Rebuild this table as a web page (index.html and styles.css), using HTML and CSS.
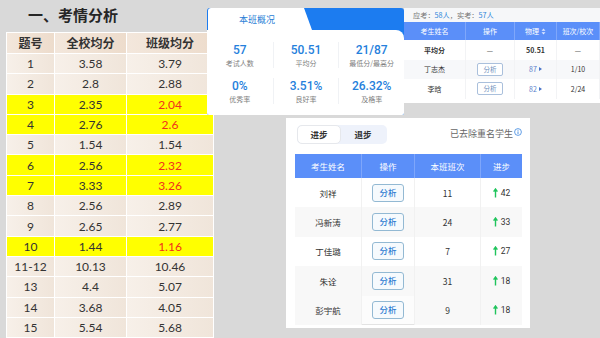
FILE: index.html
```html
<!DOCTYPE html>
<html lang="zh">
<head>
<meta charset="utf-8">
<link rel="stylesheet" href="styles.css">
</head>
<body>
<div class="slide">
  <section class="left">
    <h1 class="title">一、考情分析</h1>
    <table class="qtable">
      <thead>
        <tr><th>题号</th><th>全校均分</th><th>班级均分</th></tr>
      </thead>
      <tbody>
        <tr><td>1</td><td>3.58</td><td>3.79</td></tr>
        <tr><td>2</td><td>2.8</td><td>2.88</td></tr>
        <tr class="hl"><td>3</td><td>2.35</td><td class="red">2.04</td></tr>
        <tr class="hl"><td>4</td><td>2.76</td><td class="red">2.6</td></tr>
        <tr><td>5</td><td>1.54</td><td>1.54</td></tr>
        <tr class="hl"><td>6</td><td>2.56</td><td class="red">2.32</td></tr>
        <tr class="hl"><td>7</td><td>3.33</td><td class="red">3.26</td></tr>
        <tr><td>8</td><td>2.56</td><td>2.89</td></tr>
        <tr><td>9</td><td>2.65</td><td>2.77</td></tr>
        <tr class="hl"><td>10</td><td>1.44</td><td class="red">1.16</td></tr>
        <tr><td>11-12</td><td>10.13</td><td>10.46</td></tr>
        <tr><td>13</td><td>4.4</td><td>5.07</td></tr>
        <tr><td>14</td><td>3.68</td><td>4.05</td></tr>
        <tr><td>15</td><td>5.54</td><td>5.68</td></tr>
      </tbody>
    </table>
  </section>

  <section class="right">
    <div class="toprow">
      <div class="overview">
        <div class="ov-head"><div class="ov-tab">本班概况</div></div>
        <div class="ov-body">
          <div class="stat"><div class="val">57</div><div class="lbl">考试人数</div></div>
          <div class="stat sep"><div class="val">50.51</div><div class="lbl">平均分</div></div>
          <div class="stat sep"><div class="val">21/87</div><div class="lbl">最低分/最高分</div></div>
          <div class="stat"><div class="val">0%</div><div class="lbl">优秀率</div></div>
          <div class="stat sep"><div class="val">3.51%</div><div class="lbl">良好率</div></div>
          <div class="stat sep"><div class="val">26.32%</div><div class="lbl">及格率</div></div>
        </div>
      </div>

      <div class="ranklist">
        <div class="rl-info">应考：<span class="blue">58人</span>，实考：<span class="blue">57人</span></div>
        <div class="rl-grid">
          <div class="rl-h">考生姓名</div>
          <div class="rl-h">操作</div>
          <div class="rl-h">物理 <svg class="sort" width="5" height="7" viewBox="0 0 5 7"><path d="M2.5 0.5L4.5 2.8H0.5Z M2.5 6.5L4.5 4.2H0.5Z" fill="#dfe8ff"/></svg></div>
          <div class="rl-h">班次/校次</div>

          <div class="rl-c b">平均分</div>
          <div class="rl-c">—</div>
          <div class="rl-c b">50.51</div>
          <div class="rl-c">—</div>

          <div class="rl-c g">丁志杰</div>
          <div class="rl-c g"><span class="rl-btn">分析</span></div>
          <div class="rl-c g"><span class="score">87 <i class="tri"></i></span></div>
          <div class="rl-c g">1/10</div>

          <div class="rl-c">李晗</div>
          <div class="rl-c"><span class="rl-btn">分析</span></div>
          <div class="rl-c"><span class="score">82 <i class="tri"></i></span></div>
          <div class="rl-c">2/24</div>
        </div>
      </div>
    </div>

    <div class="progress">
      <div class="pg-top">
        <div class="toggle"><span class="tg on">进步</span><span class="tg">退步</span></div>
        <div class="note">已去除重名学生<svg class="info" width="8" height="8" viewBox="0 0 8 8"><circle cx="4" cy="4" r="3.4" fill="none" stroke="#3b86e0" stroke-width="0.8"/><path d="M4 3.4V6" stroke="#3b86e0" stroke-width="0.9"/><circle cx="4" cy="2.3" r="0.5" fill="#3b86e0"/></svg></div>
      </div>
      <div class="pg-grid">
        <div class="pg-h">考生姓名</div><div class="pg-h">操作</div><div class="pg-h">本班班次</div><div class="pg-h">进步</div>

        <div class="pg-c">刘祥</div><div class="pg-c"><span class="pg-btn">分析</span></div><div class="pg-c">11</div><div class="pg-c up"><svg class="arrow" width="5" height="10" viewBox="0 0 5 10"><path d="M2.5 9.5V1.5M0.6 3.6L2.5 1L4.4 3.6" fill="none" stroke="#1fc45c" stroke-width="1.4"/></svg>42</div>

        <div class="pg-c g">冯新涛</div><div class="pg-c g"><span class="pg-btn">分析</span></div><div class="pg-c g">24</div><div class="pg-c g up"><svg class="arrow" width="5" height="10" viewBox="0 0 5 10"><path d="M2.5 9.5V1.5M0.6 3.6L2.5 1L4.4 3.6" fill="none" stroke="#1fc45c" stroke-width="1.4"/></svg>33</div>

        <div class="pg-c">丁佳璐</div><div class="pg-c"><span class="pg-btn">分析</span></div><div class="pg-c">7</div><div class="pg-c up"><svg class="arrow" width="5" height="10" viewBox="0 0 5 10"><path d="M2.5 9.5V1.5M0.6 3.6L2.5 1L4.4 3.6" fill="none" stroke="#1fc45c" stroke-width="1.4"/></svg>27</div>

        <div class="pg-c g">朱诠</div><div class="pg-c g"><span class="pg-btn">分析</span></div><div class="pg-c g">31</div><div class="pg-c g up"><svg class="arrow" width="5" height="10" viewBox="0 0 5 10"><path d="M2.5 9.5V1.5M0.6 3.6L2.5 1L4.4 3.6" fill="none" stroke="#1fc45c" stroke-width="1.4"/></svg>18</div>

        <div class="pg-c g">彭宇航</div><div class="pg-c w"><span class="pg-btn">分析</span></div><div class="pg-c g">9</div><div class="pg-c g up"><svg class="arrow" width="5" height="10" viewBox="0 0 5 10"><path d="M2.5 9.5V1.5M0.6 3.6L2.5 1L4.4 3.6" fill="none" stroke="#1fc45c" stroke-width="1.4"/></svg>18</div>
      </div>
    </div>
  </section>
</div>
</body>
</html>
```

FILE: styles.css
```css
* { box-sizing: border-box; }
html, body { margin: 0; padding: 0; }
body {
  width: 600px;
  height: 338px;
  overflow: hidden;
  background: #d9d9d9;
  font-family: "Noto Sans CJK SC", "Noto Sans", sans-serif;
  color: #333;
}
.slide {
  display: flex;
  width: 600px;
  height: 338px;
  overflow: hidden;
}

/* ---------- left ---------- */
.left {
  flex: none;
  width: 213px;
  padding-left: 6px;
}
.title {
  margin: 0 0 7px 22px;
  padding-top: 4px;
  font-size: 15px;
  line-height: 22px;
  font-weight: 700;
  color: #262626;
}
.qtable {
  width: 208px;
  table-layout: fixed;
  border-collapse: separate;
  border-spacing: 1px;
  background: #fff;
  margin-top: -1px;
}
.qtable th:nth-child(1), .qtable td:nth-child(1) { width: 47px; }
.qtable th:nth-child(2), .qtable td:nth-child(2) { width: 71px; }
.qtable th {
  height: 20px;
  padding: 0;
  font-size: 12px;
  font-weight: 700;
  color: #333;
  background: linear-gradient(90deg, #f3e7dc, #eddccc);
  line-height: 20px;
}
.qtable td {
  height: 19.3px;
  padding: 0;
  text-align: center;
  font-family: "Lato", "Open Sans", sans-serif;
  font-size: 12px;
  line-height: 19px;
  color: #333;
  background: linear-gradient(90deg, #f7f0e9, #f0e5da);
}
.qtable tr.hl td { background: #ffff00; }
.qtable td.red { color: #f2301c; }

/* ---------- right ---------- */
.right {
  flex: none;
  width: 393px;
  margin-left: -6px;
}
.toprow {
  display: flex;
  align-items: flex-start;
  padding-top: 8px;
}
.overview {
  flex: none;
  width: 197px;
  height: 107px;
  background: #1c7cf0;
  border-radius: 3px 3px 2px 2px;
  display: flex;
  flex-direction: column;
  overflow: hidden;
  padding-left: 1px;
}
.ov-head { height: 22px; display: flex; }
.ov-tab {
  width: 104px;
  background: #fff;
  border-top-left-radius: 3px;
  clip-path: polygon(0 0, 96px 0, 104px 100%, 0 100%);
  text-align: center;
  padding-right: 6px;
  font-size: 9px;
  line-height: 24px;
  color: #2a80d6;
}
.ov-body {
  flex: 1;
  margin-left: -1px;
  background: #fff;
  border-radius: 0 8px 0 0;
  display: grid;
  grid-template-columns: repeat(3, 1fr);
  grid-auto-rows: 36px;
  align-items: start;
}
.stat {
  margin-top: 12px;
  height: 26px;
  text-align: center;
}
.stat.sep { border-left: 1px solid #f0f2f5; }
.val {
  font-family: "Roboto", "Noto Sans", sans-serif;
  font-weight: 500;
  font-size: 12px;
  line-height: 16px;
  color: #2580dc;
}
.lbl {
  margin-top: -1px;
  font-size: 7px;
  line-height: 12px;
  color: #808080;
}

.ranklist {
  flex: none;
  width: 196px;
  height: 95px;
  background: #fff;
}
.rl-info {
  height: 14px;
  padding-left: 9px;
  font-size: 7.2px;
  line-height: 14px;
  color: #777;
  background: #f6f7f9;
}
.blue { color: #2d86d9; }
.rl-grid {
  display: grid;
  grid-template-columns: 62px 49px 42px 43px;
  grid-template-rows: 18px repeat(3, 19.5px);
}
.rl-h {
  background: #5b8ff9;
  color: #fff;
  font-size: 7px;
  display: flex;
  align-items: center;
  justify-content: center;
  gap: 2px;
  border-right: 1px solid #7fa7fb;
}
.rl-c {
  display: flex;
  align-items: center;
  justify-content: center;
  font-size: 7px;
  color: #333;
  border-right: 1px solid #f2f3f5;
}
.rl-c.b { font-weight: 700; }
.rl-c.g { background: #f7f8fa; }
.rl-btn {
  display: inline-block;
  width: 26px;
  height: 13px;
  border: 1px solid #aac0dc;
  border-radius: 2px;
  background: #fff;
  color: #6f90bd;
  font-size: 6.5px;
  line-height: 11px;
  text-align: center;
}
.score { color: #5a7fcc; font-size: 7px; display: inline-flex; align-items: center; gap: 2px; }
.tri {
  display: inline-block;
  width: 0; height: 0;
  border-left: 3px solid #4a74c9;
  border-top: 2.5px solid transparent;
  border-bottom: 2.5px solid transparent;
}

.progress {
  width: 244px;
  height: 210px;
  margin: 3px 0 0 79px;
  background: #fff;
  padding: 7px 8px 0 9px;
}
.pg-top {
  height: 19px;
  display: flex;
  justify-content: space-between;
  align-items: center;
  padding-left: 2px;
}
.toggle {
  display: flex;
  width: 90px;
  height: 19px;
  background: #eef2fb;
  border-radius: 5px;
}
.tg {
  width: 44px;
  text-align: center;
  font-size: 8.5px;
  font-weight: 700;
  line-height: 19px;
  color: #333;
}
.tg.on {
  background: #fff;
  border: 1px solid #e6e8ec;
  border-radius: 5px;
  line-height: 17px;
}
.note {
  display: flex;
  align-items: center;
  font-size: 9px;
  color: #666;
  margin-top: -2px;
}
.info { margin-left: 1px; margin-top: -4px; }
.pg-grid {
  margin-top: 10px;
  display: grid;
  grid-template-columns: 67px 53px 66px 41px;
  grid-template-rows: 24px repeat(5, 29.4px);
}
.pg-h {
  background: #5b8ff9;
  color: #fff;
  font-size: 8.5px;
  display: flex;
  align-items: center;
  justify-content: center;
  border-right: 1px solid #7ea6fb;
}
.pg-h:nth-child(4) { border-right: 0; }
.pg-c {
  display: flex;
  align-items: center;
  justify-content: center;
  font-size: 8.5px;
  color: #333;
  border-right: 1px solid #f1f1f1;
}
.pg-c:nth-child(4n) { border-right: 0; }
.pg-c.g { background: #f8f8f8; }
.pg-c.w { background: #fcfcfc; box-shadow: inset 0 -1px 0 #e3e3e3; }
.pg-btn {
  display: inline-block;
  width: 32px;
  height: 18px;
  border: 1.5px solid #93b9d3;
  border-radius: 3px;
  background: #f6fafd;
  color: #2b7bd1;
  font-size: 8.5px;
  font-weight: 500;
  line-height: 15px;
  text-align: center;
}
.up { gap: 3px; font-family: "Roboto", "Noto Sans", sans-serif; }
.arrow { flex: none; }
```
